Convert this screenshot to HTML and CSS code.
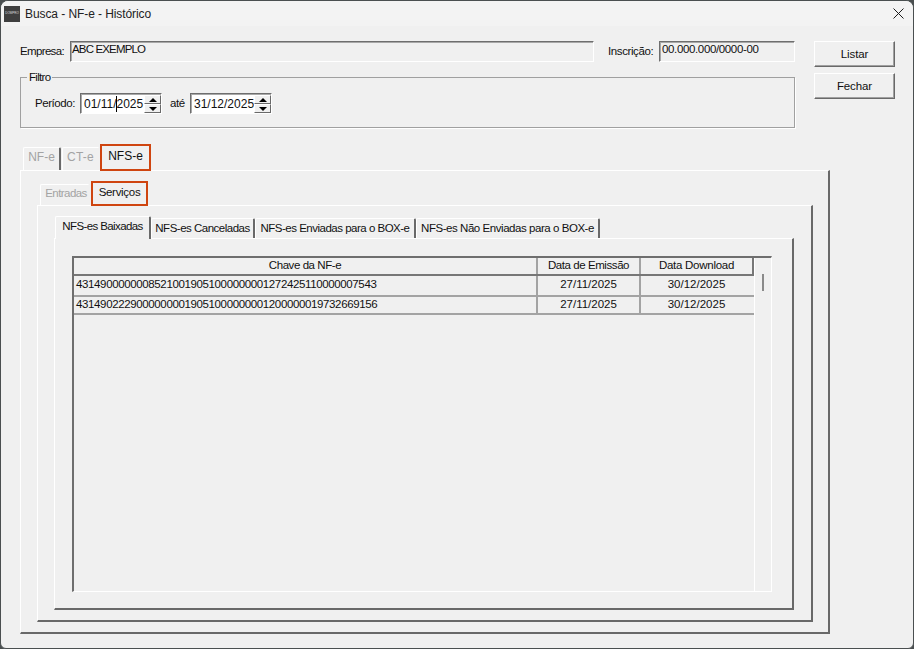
FILE: index.html
```html
<!DOCTYPE html>
<html lang="pt-BR">
<head>
<meta charset="utf-8">
<title>Busca - NF-e - Histórico</title>
<link rel="stylesheet" href="styles.css">
</head>
<body>
<div class="window">
  <header class="titlebar">
    <div class="logo"><span>DOMPRO</span></div>
    <div class="title">Busca - NF-e - Histórico</div>
    <svg class="close" width="11" height="11" viewBox="0 0 11 11"><path d="M.5.5l10 10M10.5.5l-10 10" stroke="#1a1a1a" fill="none"/></svg>
  </header>
  <div class="content">
    <div class="top">
      <div class="left">
        <div class="row-info">
          <label class="lbl-emp">Empresa:</label>
          <div class="field field-emp">ABC EXEMPLO</div>
          <label class="lbl-ins">Inscrição:</label>
          <div class="field field-ins">00.000.000/0000-00</div>
        </div>
        <fieldset class="filter">
          <legend>Filtro</legend>
          <label class="lbl-per">Período:</label>
          <div class="date">
            <span class="date-text">01/11/<i class="caret"></i>2025</span>
            <div class="spin"><button class="up"></button><button class="down"></button></div>
          </div>
          <label class="lbl-ate">até</label>
          <div class="date">
            <span class="date-text">31/12/2025</span>
            <div class="spin"><button class="up"></button><button class="down"></button></div>
          </div>
        </fieldset>
      </div>
      <div class="actions">
        <button class="btn">Listar</button>
        <button class="btn">Fechar</button>
      </div>
    </div>

    <div class="tabs tabs1">
      <div class="tab off t-nfe">NF-e</div>
      <div class="tab off t-cte">CT-e</div>
      <div class="tab mark m-nfs">NFS-e</div>
    </div>
    <section class="panel p1">
      <div class="tabs tabs2">
        <div class="tab off t-ent">Entradas</div>
        <div class="tab mark m-serv">Serviços</div>
      </div>
      <section class="panel p2">
        <div class="tabs tabs3">
          <div class="tab on t-a">NFS-es Baixadas</div>
          <div class="tab t-b">NFS-es Canceladas</div>
          <div class="tab t-c">NFS-es Enviadas para o BOX-e</div>
          <div class="tab t-d">NFS-es Não Enviadas para o BOX-e</div>
        </div>
        <section class="panel p3">
          <div class="grid">
            <div class="grid-main">
              <div class="g-row g-head">
                <div class="c c1">Chave da NF-e</div>
                <div class="c c2">Data de Emissão</div>
                <div class="c c3">Data Download</div>
              </div>
              <div class="g-row r1">
                <div class="c c1 l">43149000000085210019051000000001272425110000007543</div>
                <div class="c c2">27/11/2025</div>
                <div class="c c3">30/12/2025</div>
              </div>
              <div class="g-row r2">
                <div class="c c1 l">43149022290000000019051000000001200000019732669156</div>
                <div class="c c2">27/11/2025</div>
                <div class="c c3">30/12/2025</div>
              </div>
            </div>
            <div class="grid-scroll"><div class="thumb"></div></div>
          </div>
        </section>
      </section>
    </section>
  </div>
</div>
</body>
</html>
```
FILE: styles.css
```css
* { box-sizing: border-box; }
html, body { margin: 0; padding: 0; }
body { width: 914px; height: 649px; overflow: hidden; background: #4a4f50; }
.window {
  width: 914px; height: 649px; background: #f0f0f0;
  border: 1px solid #4a4f50; border-radius: 8px 8px 6px 6px; overflow: hidden;
  font: 11.5px "Liberation Sans", Arial, sans-serif; letter-spacing: -0.2px; color: #111;
}
.titlebar { height: 25px; background: #f3f3f3; display: flex; align-items: center; padding-left: 3px; }
.logo { width: 16px; height: 16px; background: #3f3f3f; display: flex; align-items: center; justify-content: center; overflow: hidden; }
.logo span { font-size: 3px; letter-spacing: 0; color: #ddd; line-height: 1; }
.title { margin-left: 5px; font-size: 12px; letter-spacing: -0.08px; color: #222; flex: 1; }
.close { margin-right: 9px; }
.content { padding: 15px 0 0 19px; }
.top { display: flex; }
.left { width: 775px; }
.row-info { display: flex; height: 20px; align-items: flex-start; }
label { line-height: 20px; white-space: nowrap; letter-spacing: -0.45px; }
.lbl-emp { width: 50px; letter-spacing: -0.65px; }
.lbl-ins { width: 51px; margin-left: 14px; letter-spacing: -0.4px; }
.field {
  height: 21px; background: #f0f0f0; border: 1px solid; border-color: #6e6e6e #fff #fff #6e6e6e;
  box-shadow: inset 1px 1px 0 #a8a8a8; padding: 1px 0 0 1px; line-height: 13px; white-space: nowrap;
}
.field-emp { width: 524px; letter-spacing: -0.85px; }
.field-ins { width: 136px; letter-spacing: -0.36px; padding-left: 2px; }
.filter {
  margin: 10px 0 0; padding: 0 0 0 14px; width: 775px; height: 57px; min-inline-size: 0; border: 1px solid #a0a0a0;
  display: flex; align-items: flex-start; box-shadow: 1px 1px 0 #fff;
}
.filter legend { margin-left: -8px; padding: 0 2px; line-height: 12px; letter-spacing: -0.7px; }
.lbl-per { width: 45px; margin-top: 10px; }
.date {
  width: 82px; height: 21px; margin-top: 10px; display: flex; background: #f0f0f0; border: 1px solid; border-color: #6e6e6e #fff #fff #6e6e6e;
  box-shadow: inset 1px 1px 0 #a8a8a8;
}
.date-text { flex: 1; margin: 1px 0 0 1px; background: #fff; padding: 1px 0 0 2px; font-size: 12px; letter-spacing: 0; line-height: 16px; white-space: nowrap; }
.caret { display: inline-block; width: 1px; height: 16px; background: #000; vertical-align: -4px; margin-right: -1px; }
.spin { width: 17px; margin: 1px 0 0; display: flex; flex-direction: column; }
.spin button {
  flex: 1; padding: 0; background: #f0f0f0; border: 1px solid; border-color: #fff #696969 #696969 #fff; position: relative;
}
.spin .up::after, .spin .down::after { content: ""; position: absolute; left: 4px; width: 0; height: 0; border-left: 4px solid transparent; border-right: 4px solid transparent; }
.spin .up::after { top: 2px; border-bottom: 4px solid #000; }
.spin .down::after { top: 2px; border-top: 4px solid #000; }
.lbl-ate { width: 20px; margin: 10px 0 0 8px; }
.actions { display: flex; flex-direction: column; gap: 6px; margin-left: 19px; }
.btn {
  width: 81px; height: 26px; background: #f0f0f0; border: 1px solid; border-color: #fff #696969 #696969 #fff;
  box-shadow: inset -1px -1px 0 #a0a0a0; font: inherit; letter-spacing: -0.1px; color: #111; padding: 0;
}
.tabs { display: flex; align-items: flex-end; position: relative; z-index: 1; }
.tab {
  background: #f0f0f0; border: 1px solid; border-color: #fff #696969 transparent #fff; border-bottom: 0; border-radius: 2px 2px 0 0;
  text-align: center; white-space: nowrap; height: 20px; line-height: 18px; border-right-width: 2px;
}
.tab.off { color: #a3a3a3; }
.tab.mark { border: 2px solid #cf4510; border-radius: 0; }
.tabs1 { margin: 16px 0 0 3px; height: 26px; }
.t-nfe { width: 38px; height: 23px; font-size: 12px; letter-spacing: 0; line-height: 19px; }
.t-cte { width: 38px; height: 23px; font-size: 12px; letter-spacing: 0.2px; line-height: 19px; margin-left: 1px; border-right-color: #f0f0f0; }
.m-nfs { width: 51px; height: 27px; font-size: 12px; letter-spacing: 0; line-height: 20px; margin-bottom: -1px; }
.panel { background: #f0f0f0; border: 1px solid; border-color: #fff #696969 #696969 #fff; border-right-width: 2px; border-bottom-width: 2px; }
.p1 { width: 810px; height: 464px; padding: 10px 0 0 16px; }
.tabs2 { height: 24px; margin-left: 3px; }
.t-ent { width: 50px; height: 21px; line-height: 17px; letter-spacing: -0.55px; padding-left: 3px; border-right-color: #f0f0f0; }
.m-serv { width: 57px; height: 25px; line-height: 19px; margin-left: 1px; margin-bottom: -1px; letter-spacing: -0.3px; }
.p2 { width: 776px; height: 417px; padding: 10px 0 0 16px; }
.tabs3 { height: 22px; margin-left: 1px; letter-spacing: -0.5px; }
.t-a { width: 96px; height: 23px; line-height: 19px; margin-bottom: -1px; letter-spacing: -0.6px; }
.t-b { width: 104px; }
.t-c { width: 161px; }
.t-d { width: 184px; letter-spacing: -0.45px; }
.p3 { width: 740px; height: 372px; padding: 17px 0 0 17px; }
.grid { width: 700px; height: 336px; display: flex; border: 1px solid; border-color: #6e6e6e #fff #fff #6e6e6e; border-top-width: 2px; border-left-width: 2px; }
.grid-main { width: 680px; }
.g-row { display: flex; height: 21px; border-bottom: 2px solid #a3a3a3; letter-spacing: 0; }
.g-head { height: 18px; border-bottom: 2px solid #777; border-right: 2px solid #777; letter-spacing: -0.43px; }
.r2 { height: 18px; }
.c { line-height: 16px; text-align: center; border-right: 2px solid #a3a3a3; white-space: nowrap; }
.r2 .c { line-height: 14px; }
.g-head .c { line-height: 15px; }
.c1 { width: 464px; }
.c2 { width: 103px; }
.c3 { width: 111px; border-right-width: 0; }
.g-head .c3 { letter-spacing: -0.27px; }
.l { text-align: left; padding-left: 2px; letter-spacing: -0.37px; }
.grid-scroll { flex: 1; border-left: 1px solid #fff; padding: 16px 0 0 7px; }
.thumb { width: 2px; height: 17px; background: #8a8a8a; }
```
